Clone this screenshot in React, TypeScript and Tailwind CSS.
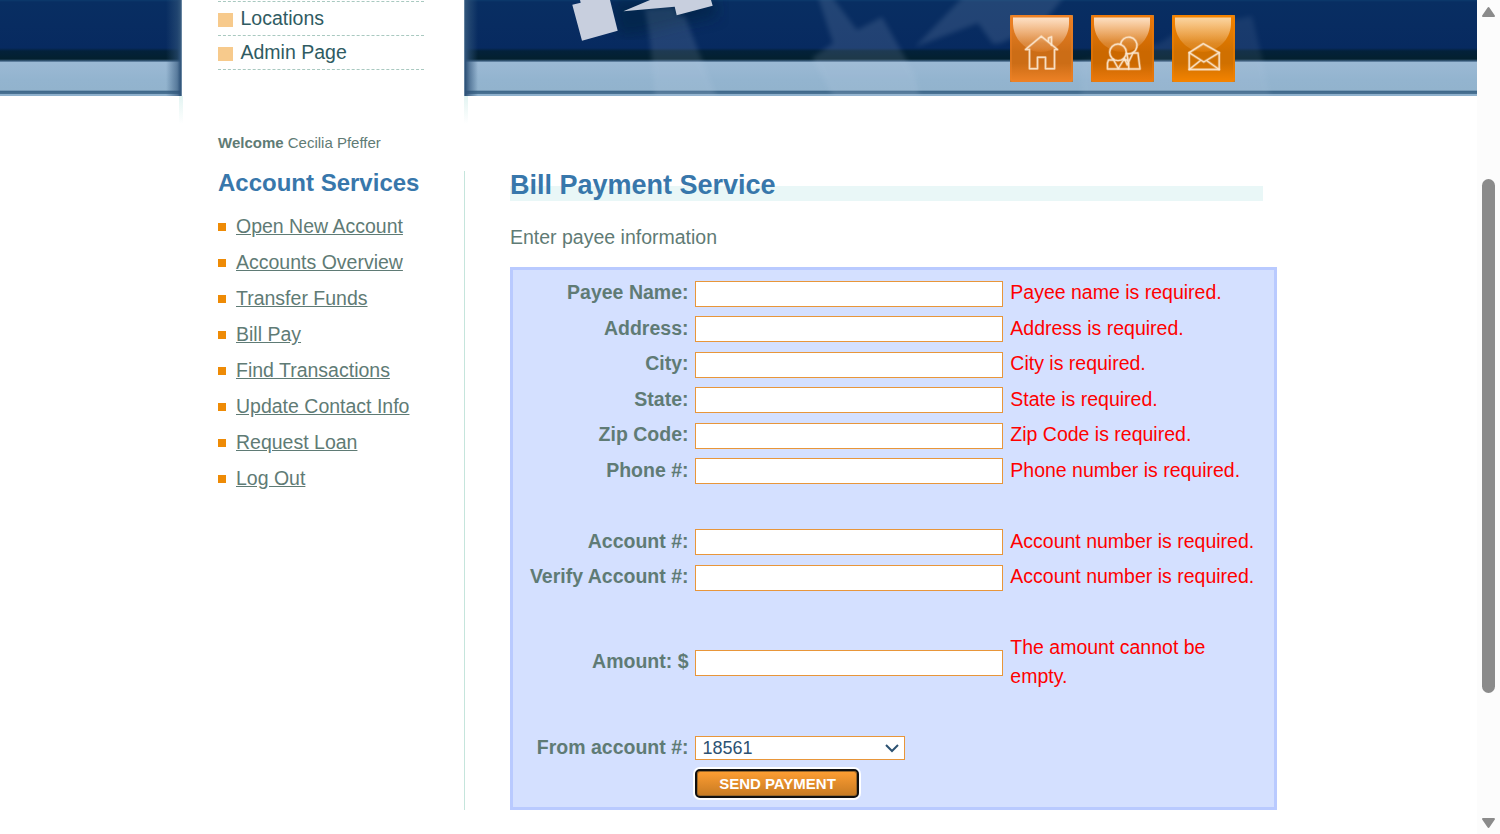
import React from "react";

const services = [
  "Open New Account",
  "Accounts Overview",
  "Transfer Funds",
  "Bill Pay",
  "Find Transactions",
  "Update Contact Info",
  "Request Loan",
  "Log Out",
];

const payeeFields = [
  ["Payee Name:", "Payee name is required."],
  ["Address:", "Address is required."],
  ["City:", "City is required."],
  ["State:", "State is required."],
  ["Zip Code:", "Zip Code is required."],
  ["Phone #:", "Phone number is required."],
];

const accountFields = [
  ["Account #:", "Account number is required."],
  ["Verify Account #:", "Account number is required."],
];

const banner =
  "bg-[linear-gradient(to_bottom,#0c3a6c_0px,#082e62_2px,#082c61_25px,#072a60_48px,#03213a_51px,#03202f_59px,#3d5f80_61px,#9bb9d4_62.5px,#93b4cf_80px,#92b3cd_90px,#40698b_91.5px,#4a7293_93.5px,#8fb1cd_94px,#8fb1cd_96px)]";

function Tile({ id, top, bottom, gloss, children }: { id: string; top: string; bottom: string; gloss: string; children: React.ReactNode }) {
  return (
    <button aria-label={id} className="h-[67px] w-[63px]">
      <svg width="63" height="67" viewBox="0 0 63 67" className="block">
        <defs>
          <linearGradient id={`${id}-bg`} x1="0" y1="0" x2="0" y2="1">
            <stop offset="0" stopColor={top} />
            <stop offset="0.55" stopColor={bottom} />
            <stop offset="0.72" stopColor={bottom} />
            <stop offset="1" stopColor={top} />
          </linearGradient>
          <linearGradient id={`${id}-gl`} x1="0" y1="0" x2="0" y2="1">
            <stop offset="0" stopColor={gloss} stopOpacity="0.88" />
            <stop offset="0.35" stopColor={gloss} stopOpacity="0.55" />
            <stop offset="0.75" stopColor={gloss} stopOpacity="0.2" />
            <stop offset="1" stopColor={top} stopOpacity="0.35" />
          </linearGradient>
        </defs>
        <rect width="63" height="67" fill="#a08052" />
        <rect width="63" height="67" rx="2.5" fill={`url(#${id}-bg)`} />
        <rect x="1" y="1" width="61" height="65" rx="3" fill="none" stroke={top} strokeOpacity="0.6" strokeWidth="1.5" />
        <path d="M3 2.5H59V9C58.500 25 45 37 31 37S3.500 25 3 9Z" fill={`url(#${id}-gl)`} />
        <g fill="none" stroke="#fdebd6" strokeOpacity="0.3" strokeWidth="2.800" strokeLinejoin="round" strokeLinecap="round">
          {children}
        </g>
        <g fill="none" stroke="#fdebd6" strokeOpacity="0.85" strokeWidth="1.400" strokeLinejoin="round" strokeLinecap="round">
          {children}
        </g>
      </svg>
    </button>
  );
}

function MenuItem({ label }: { label: string }) {
  return (
    <li className="flex h-[34px] items-center gap-[7.5px] border-b border-dashed border-[#a9c9c0]">
      <span className="mt-[3px] h-[14px] w-[15px] bg-[#f7ca8c]" />
      <a className="leading-[29px] text-[#2f5b62]">{label}</a>
    </li>
  );
}

function Field({ label, error, tall = false }: { label: string; error: string; tall?: boolean }) {
  return (
    <div className={tall ? "flex h-[64.75px] items-center" : "flex h-[35.5px] items-center"}>
      <label className={`w-[175.5px] text-right font-bold leading-[29.25px] ${tall ? "pb-[3.5px]" : "pb-[1.5px]"}`}>{label}</label>
      <input className="ml-[6.5px] h-[26px] w-[308px] border border-[#e8963a] bg-white px-2 outline-none" />
      <span className={`ml-[7.3px] w-[250px] text-[#ff0000] ${tall ? "pb-[2px] leading-[29px]" : "pb-[1.5px] leading-[29.25px]"}`}>{error}</span>
    </div>
  );
}

export default function App() {
  return (
    <div className="flex h-[834px] w-[1500px] overflow-hidden bg-white font-['Liberation_Sans',Arial,sans-serif] text-[19.5px] text-[#5f7b75]">
      <div className="w-[1477px]">
        <header className="flex h-[96px]">
          <div className={`flex w-[182px] justify-end ${banner}`}>
            <div className="h-full w-[16px] bg-[linear-gradient(to_right,transparent,#2f537999_70%,#2f5379_90%,#7f9ab2)]" />
          </div>
          <nav className="w-[282px] pl-[36px]">
            <ul className="mt-px w-[206px] border-t border-dashed border-[#a9c9c0]">
              <MenuItem label="Locations" />
              <MenuItem label="Admin Page" />
            </ul>
          </nav>
          <div className={`relative flex-1 ${banner}`}>
            <div className="h-full w-[14px] bg-[linear-gradient(to_right,#7f9ab2,#2f5379_10%,#2f537999_40%,transparent)]" />
            <svg className="absolute left-0 top-0" width="1013" height="96" viewBox="464 0 1013 96">
              <defs>
                <filter id="soft"><feGaussianBlur stdDeviation="2.6" /></filter>
                <filter id="dark"><feGaussianBlur stdDeviation="7" /></filter>
              </defs>
              <path d="M612 0L715 0L718 16L680 24L640 34L618 36Z" fill="#03203f" opacity="0.6" filter="url(#dark)" />
              <g fill="#c0d0e6" opacity="0.14" filter="url(#soft)">
                <path d="M645 9L675 7L677 15L685 16L698 50L718 100H655L650 40Z" />
                <path d="M818 -3H832L857 30L882 17L915 75L920 100H835L812 58L833 43Z" />
                <path d="M915 47L963 -3H1064L1041 25L1001 43L993 44L978 23Z" />
              </g>
              <path d="M1080 62L1160 43L1180 30L1252 16L1263 62L1271 100H1082Z" fill="#c0d0e6" opacity="0.09" filter="url(#soft)" />
              <path d="M572.3 4.7L580.7 2.7L580 0H610L617.7 30.7L582 40.7Z" fill="#c8cfde" />
              <path d="M623.3 11.2L650 0H711L712.7 5.7L676.7 15.3L674.7 6.7Z" fill="#c8cfde" />
            </svg>
            <div className="absolute left-[546px] top-[15px] flex gap-[18px]">
              <Tile id="home" top="#ee8226" bottom="#cc6d16" gloss="#ffeedd">
                <path d="M15.5 34.5L31.3 21.300L47.5 34.5H44.5V53.7H35.5V42.3H27.5V53.7H19.5V34.5Z" />
                <path d="M38.500 26V23L41.5 21.8V30" />
              </Tile>
              <Tile id="about" top="#ec7a0c" bottom="#cb6800" gloss="#ffeedd">
                <circle cx="27" cy="37.3" r="8.3" />
                <path d="M29.500 29.300A8.3 8.3 0 1 1 35.5 38.400" />
                <path d="M21.500 45H17.500L16.5 48V54H37.7V48.500L36.200 45H33" />
                <path d="M22.300 44.500L27.3 53.500L32.800 44.500" />
                <path d="M33.500 43.500L36.200 50L42 38H47L49 54H37.7" />
                <path d="M36 39.500L37 45" />
              </Tile>
              <Tile id="contact" top="#f58400" bottom="#d07000" gloss="#fbe0b8">
                <path d="M17.2 37.7L31.3 28.7L47.2 37.7V54.5H17.2Z" />
                <path d="M17.2 37.7L31.800 47L47.2 37.7M17.2 54.5L28.500 45.500M47.2 54.5L34.500 45.500" />
              </Tile>
            </div>
          </div>
        </header>

        <main className="relative flex">
          <div className="absolute left-[179px] top-0 h-[28px] w-[4px] bg-gradient-to-b from-[#e3f4f2] to-transparent" />
          <div className="absolute left-[464px] top-0 h-[28px] w-[4px] bg-gradient-to-b from-[#e3f4f2] to-transparent" />
          <aside className="w-[464px] pl-[218px]">
            <p className="mt-[36px] text-[15px] leading-[22px]">
              <b>Welcome</b> Cecilia Pfeffer
            </p>
            <h2 className="mt-[15px] text-[24px] font-bold leading-[28px] text-[#3877ab]">Account Services</h2>
            <ul className="mt-[11px]">
              {services.map((item) => (
                <li key={item} className="flex h-[36px] items-center gap-[10px]">
                  <span className="mt-[2px] size-[8px] bg-[#ee8b06]" />
                  <a className="pt-[2px] underline">{item}</a>
                </li>
              ))}
            </ul>
          </aside>

          <section className="mt-[75px] h-[639px] w-[813px] border-l border-[#c5e5dc] pl-[45px]">
            <h1 className="mt-[1px] h-[29px] w-[753px] bg-[linear-gradient(to_bottom,transparent_14px,#e9f7f7_14px)] text-[27px] font-bold leading-[26px] text-[#3877ab]">
              Bill Payment Service
            </h1>
            <p className="mt-[22px] leading-[29px]">Enter payee information</p>
            <form className="mt-[15px] h-[543px] w-[767px] border-[3px] border-[#b9caff] bg-[#d4e0ff] pt-[6px]">
              {payeeFields.map(([label, error]) => (
                <Field key={label} label={label} error={error} />
              ))}
              <div className="h-[35.5px]" />
              {accountFields.map(([label, error]) => (
                <Field key={label} label={label} error={error} />
              ))}
              <div className="h-[35.5px]" />
              <Field label="Amount: $" error="The amount cannot be empty." tall />
              <div className="h-[35.5px]" />
              <div className="flex h-[34px] items-center">
                <label className="w-[175.5px] pb-[2px] text-right font-bold leading-[29px]">From account #:</label>
                <div className="ml-[6.5px] flex h-[24px] w-[210px] items-center justify-between border border-[#e8963a] bg-white pl-[6.5px] pr-[5px] text-[18px] text-[#2c5272]">
                  <span>18561</span>
                  <svg width="14" height="9" viewBox="0 0 14 9" fill="none" stroke="#2c5272" strokeWidth="2">
                    <path d="M1 1L7 7L13 1" />
                  </svg>
                </div>
              </div>
              <button
                type="button"
                className="ml-[182px] mt-[4.2px] block h-[29px] w-[164px] rounded-[5px] border-2 border-[#101010] bg-gradient-to-b from-[#ff9f33] to-[#c77a22] pl-[1px] text-[15px] font-bold leading-[24px] text-white shadow-[0_0_0_2px_#fff,inset_0_0_0_1px_#9b6728]"
              >
                SEND PAYMENT
              </button>
            </form>
          </section>
        </main>
      </div>

      <div className="flex w-[23px] flex-col items-center bg-[#fcfcfc]">
        <svg className="mt-[6px]" width="15" height="12" viewBox="0 0 15 12">
          <path d="M7.5 2L13 10H2Z" fill="#8b8b8b" stroke="#8b8b8b" strokeWidth="2" strokeLinejoin="round" />
        </svg>
        <div className="mt-[161px] h-[514px] w-[13px] rounded-full bg-[#8b8b8b]" />
        <svg className="mt-[124px]" width="15" height="12" viewBox="0 0 15 12">
          <path d="M7.5 10L13 2H2Z" fill="#8b8b8b" stroke="#8b8b8b" strokeWidth="2" strokeLinejoin="round" />
        </svg>
      </div>
    </div>
  );
}
